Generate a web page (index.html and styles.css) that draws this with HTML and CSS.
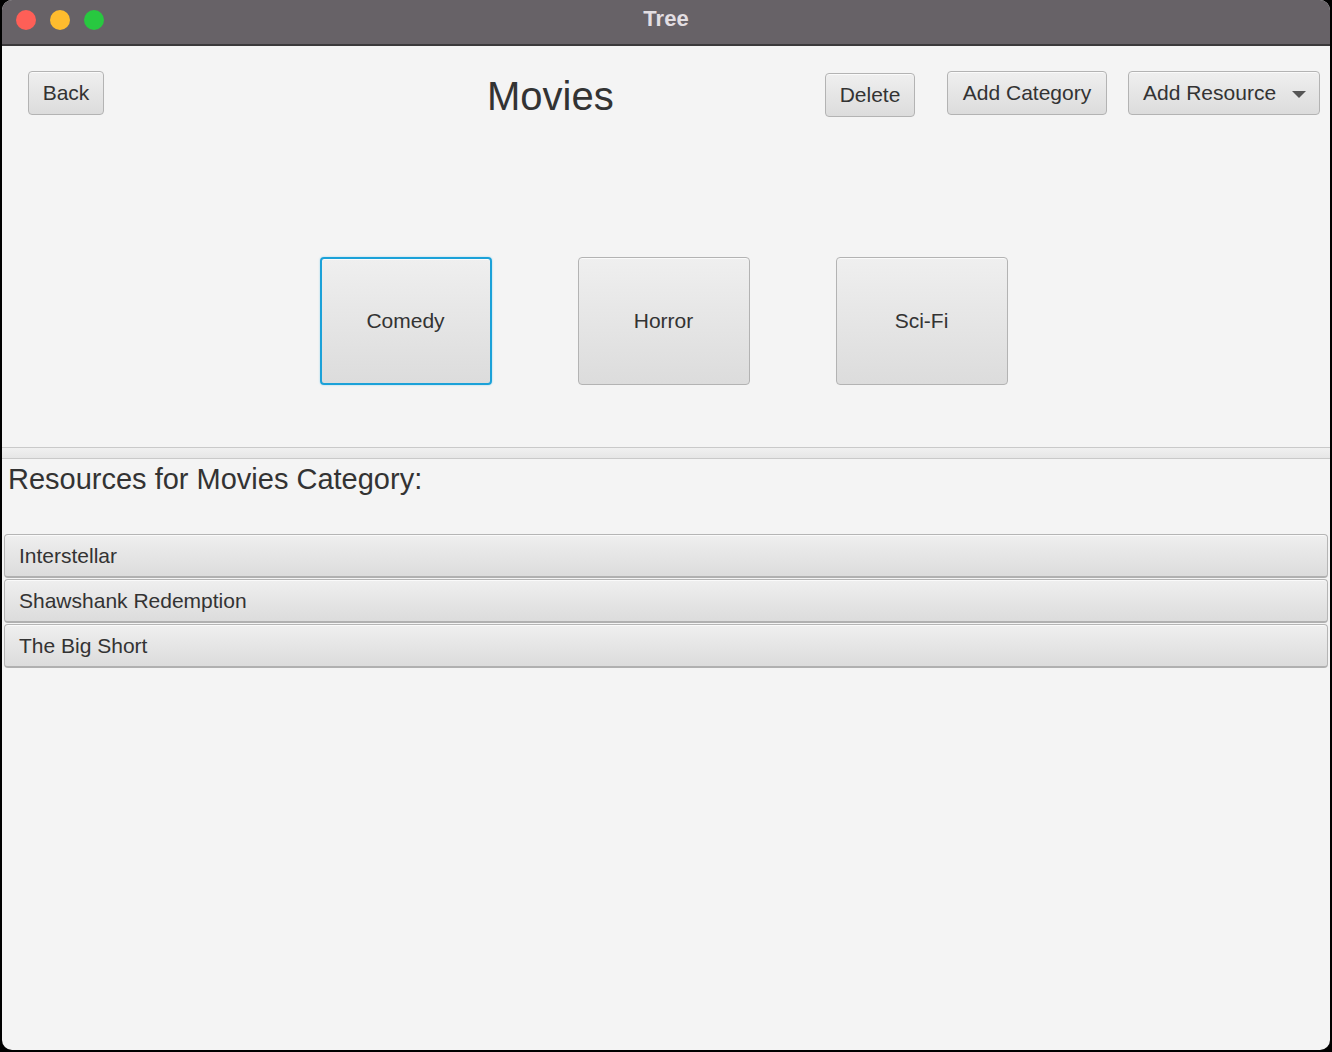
FILE: index.html
```html
<!DOCTYPE html>
<html lang="en">
<head>
<meta charset="utf-8">
<title>Tree</title>
<link rel="stylesheet" href="styles.css">
</head>
<body>
<div class="window">
  <div class="titlebar">
    <div class="lights">
      <span class="light red"></span>
      <span class="light yellow"></span>
      <span class="light green"></span>
    </div>
    <div class="wintitle">Tree</div>
  </div>
  <div class="upper">
    <div class="toolbar">
      <button class="btn btn-back">Back</button>
      <div class="page-title">Movies</div>
      <button class="btn btn-delete">Delete</button>
      <button class="btn btn-addcat">Add Category</button>
      <button class="btn btn-addres">Add Resource <span class="caret"></span></button>
    </div>
    <div class="tiles">
      <button class="btn tile focused">Comedy</button>
      <button class="btn tile">Horror</button>
      <button class="btn tile">Sci-Fi</button>
    </div>
  </div>
  <div class="divider"></div>
  <div class="lower">
    <div class="res-heading">Resources for Movies Category:</div>
    <div class="res-list">
      <div class="res-row">Interstellar</div>
      <div class="res-row">Shawshank Redemption</div>
      <div class="res-row">The Big Short</div>
    </div>
  </div>
</div>
</body>
</html>
```

FILE: styles.css
```css
* { box-sizing: border-box; }
html, body { margin: 0; padding: 0; background: #000; }
body { width: 1332px; height: 1052px; overflow: hidden; font-family: "Liberation Sans", Arial, sans-serif; color: #333; }

.window {
  margin-left: 2px;
  width: 1328px;
  height: 1050px;
  border-radius: 10px;
  overflow: hidden;
  background: #f4f4f4;
  display: flex;
  flex-direction: column;
}

.titlebar {
  height: 46px;
  flex: none;
  background: #676267;
  border-bottom: 2px solid #3b393b;
  position: relative;
  display: flex;
  align-items: center;
  justify-content: center;
}
.lights { position: absolute; left: 14px; top: 10px; display: flex; gap: 14px; }
.light { width: 20px; height: 20px; border-radius: 50%; display: block; }
.red { background: #fe5f57; }
.yellow { background: #febc2e; }
.green { background: #28c840; }
.wintitle { color: #e2dee2; font-weight: bold; font-size: 22px; margin-top: -6px; }

.upper { height: 401px; flex: none; display: flex; flex-direction: column; }

.toolbar { display: flex; align-items: flex-start; padding: 25px 0 0 26px; height: 211px; flex: none; }

.btn {
  font-family: inherit;
  color: #333;
  font-size: 21px;
  height: 44px;
  border: 1px solid #b3b3b3;
  border-radius: 4px;
  background: linear-gradient(#efefef, #dcdcdc);
  box-shadow: inset 0 1px 0 #fafafa;
  padding: 0;
  display: flex;
  align-items: center;
  justify-content: center;
  cursor: default;
}
.btn-back { width: 76px; }
.page-title { width: 124px; margin-left: 383px; text-align: center; font-size: 40px; line-height: 50px; }
.btn-delete { width: 90px; margin-left: 214px; margin-top: 2px; }
.btn-addcat { width: 160px; margin-left: 32px; }
.btn-addres { width: 192px; margin-left: 21px; justify-content: flex-start; padding-left: 14px; }
.caret {
  width: 0; height: 0;
  border-left: 7px solid transparent;
  border-right: 7px solid transparent;
  border-top: 7px solid #555;
  margin-left: 16px;
  margin-top: 2px;
}

.tiles { display: flex; justify-content: center; gap: 86px; padding-right: 5px; }
.tile { width: 172px; height: 128px; font-size: 21px; }
.tile.focused { border: 2px solid #1ba1d8; box-shadow: 0 0 2px #8fd0ec, inset 0 1px 0 #fafafa; }

.divider {
  flex: none;
  height: 12px;
  border-top: 1px solid #c9c9c9;
  border-bottom: 1px solid #c9c9c9;
  background: linear-gradient(#f0f0f0, #e6e6e6);
}

.lower { flex: 1; }
.res-heading { font-size: 29px; padding: 2px 0 0 6px; line-height: 36px; height: 75px; }
.res-list { display: flex; flex-direction: column; gap: 1px; padding: 0 2px; }
.res-row {
  height: 44px;
  font-size: 21px;
  padding-left: 14px;
  display: flex;
  align-items: center;
  border: 1px solid #b5b5b5;
  border-bottom: 2px solid #b0b0b0;
  border-radius: 4px;
  background: linear-gradient(#efefef, #dcdcdc);
  box-shadow: inset 0 1px 0 #fafafa;
}
```
